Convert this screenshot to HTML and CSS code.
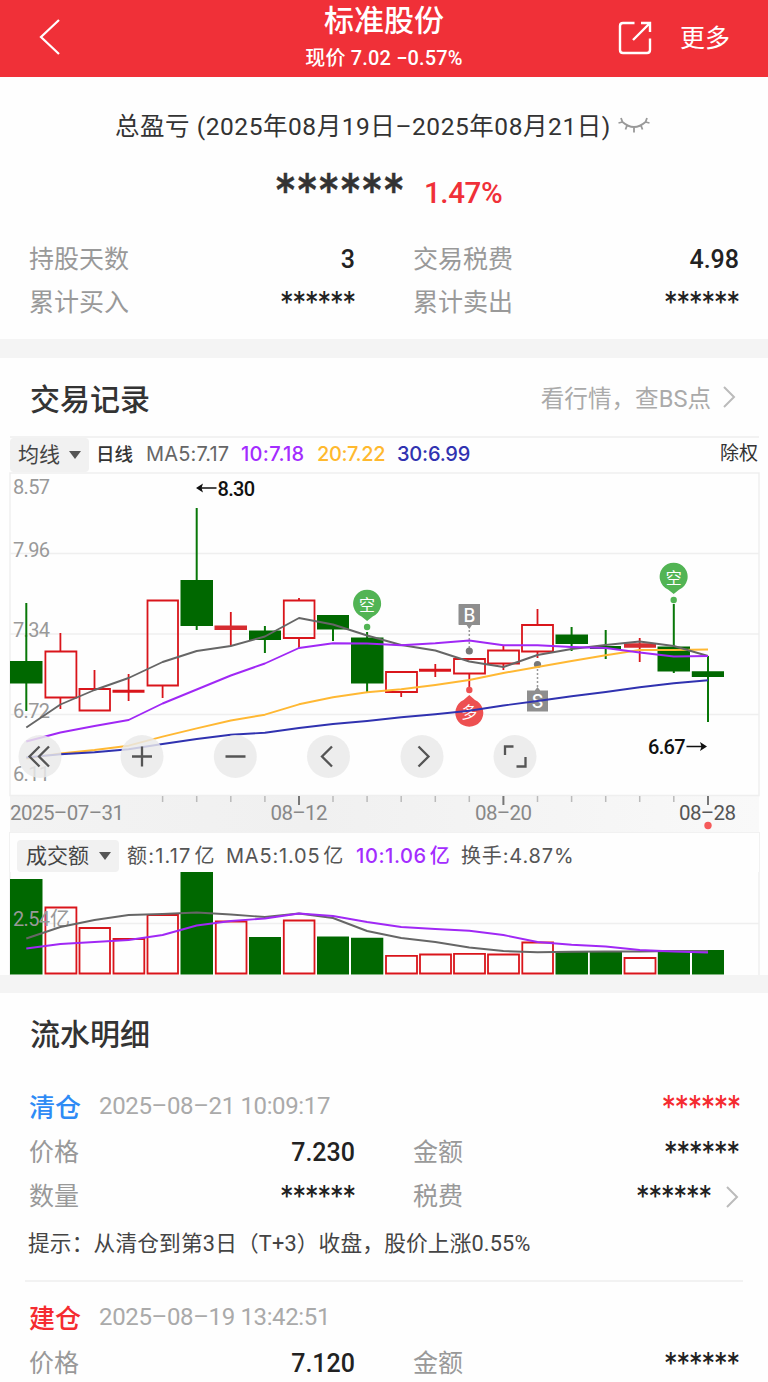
FILE: index.html
```html
<!DOCTYPE html>
<html lang="zh-CN">
<head>
<meta charset="utf-8">
<title>标准股份</title>
<link rel="stylesheet" href="styles.css">
</head>
<body>
<header class="topbar">
  <svg class="back" width="24" height="40" viewBox="0 0 24 40"><path d="M22 3 4 20 22 37"/></svg>
  <div class="heading">
    <h1 class="name">标准股份</h1>
    <p class="quote">现价 7.02 −0.57%</p>
  </div>
  <div class="actions">
    <svg class="share" width="36" height="36" viewBox="0 0 36 36"><path d="M17.500 3H6Q3 3 3 6V30Q3 33 6 33H30Q33 33 33 30V18.500M24 3H33V12M33 3 16 20"/></svg>
    <span class="more">更多</span>
  </div>
</header>

<section class="summary">
  <div class="period"><span class="period-text">总盈亏 (2025年08月19日–2025年08月21日)</span>
    <svg class="eye" width="34" height="18" viewBox="0 0 34 18"><path d="M3 1 4.500 5Q16 15 27.500 5L29 1M4.500 5 .500 6M9 8.500 7.500 12.500M16 10V15.500M23 8.500 24.500 12.500M27.500 5 31.500 6"/></svg>
  </div>
  <div class="profit"><span class="mask mask-big">******</span><span class="rate">1.47%</span></div>
  <dl class="grid stats">
    <div class="cell"><dt>持股天数</dt><dd>3</dd></div>
    <div class="cell"><dt>交易税费</dt><dd>4.98</dd></div>
    <div class="cell"><dt>累计买入</dt><dd class="mask">******</dd></div>
    <div class="cell"><dt>累计卖出</dt><dd class="mask">******</dd></div>
  </dl>
</section>

<section class="records">
  <div class="section-head">
    <h2>交易记录</h2>
    <a class="link"><span>看行情，查BS点</span><svg class="chev" width="14" height="24" viewBox="0 0 14 24"><path d="M2 2 12 12 2 22"/></svg></a>
  </div>
  <div class="chart">
    <div class="toolbar">
      <span class="pick pick-ma">均线<i class="caret"></i></span>
      <b class="kind">日线</b>
      <span class="ma5">MA5:7.17</span><span class="ma10">10:7.18</span><span class="ma20">20:7.22</span><span class="ma30">30:6.99</span>
      <span class="adjust">除权</span>
    </div>
    <svg class="kline" width="768" height="360" viewBox="0 472 768 360">
      <defs><linearGradient id="axis" x1="0" x2="1" y1="0" y2="0"><stop offset="0" stop-color="#f3f3f3"/><stop offset=".4" stop-color="#f0f0f0"/><stop offset="1" stop-color="#f9f9f9"/></linearGradient></defs>
      <rect x="10" y="796" width="749" height="36" fill="url(#axis)"/>
      <path class="rule" d="M10 473H759V795.500H10ZM10 553.500H759M10 634H759M10 714.500H759"/>
      <g class="scale">
        <text x="13" y="494" textLength="37">8.57</text><text x="13" y="557" textLength="37">7.96</text>
        <text x="13" y="637" textLength="37">7.34</text><text x="13" y="718" textLength="37">6.72</text>
        <text x="13" y="781" textLength="37">6.11</text>
      </g>
      <path class="tick" d="M162.600 796v6M196.700 796v6M230.800 796v6M264.900 796v6M333 796v6M367.100 796v6M401.200 796v6M435.300 796v6M469.300 796v6M537.500 796v6M571.600 796v6M605.700 796v6M639.700 796v6M673.800 796v6"/>
      <path class="tick-major" d="M299 796v9M503.400 796v9M708 796v9"/>
      <g class="up">
        <path d="M60.400 633V651M60.400 697V709M94.500 670V689M128.600 674V701M162.600 685V698M230.800 612V646M299 598V600M299 638V648M401.200 692V697M435.300 664V677M469.300 673V688M503.400 646V650M503.400 663V670M537.500 609V625M537.500 651V658M639.700 638V662"/>
        <path d="M45.400 651.500H76.400V697.500H45.400ZM79.500 689H110V710.500H79.500ZM147.500 600.500H178V685.500H147.500ZM283.800 600.500H314.500V638H283.800ZM386 672H417V692H386ZM454 659H485V673.500H454ZM488 650.500H519V663.500H488ZM522 625H553V651.500H522Z"/>
        <path class="flat" d="M112.500 691.200H144.500M419 670.200H451"/>
        <path class="thick" d="M214.500 627.700H247M624 645.500H656"/>
      </g>
      <g class="down">
        <path class="wick" d="M26.300 603V711M196.700 508V630M264.900 626V653M333 615V641M367.100 632V692M571.600 627V651M605.700 630V659M673.800 604V673M708 656V722"/>
        <path class="body" d="M10 661H42.500V683.500H10ZM180.500 580H213V626H180.500ZM249 630.500H281V640H249ZM317 615H349V629.500H317ZM351 637.500H383.500V683.500H351ZM555.500 634.500H588V644H555.500ZM590 646H621V649H590ZM657.500 646.500H690V671.500H657.500ZM691.800 671.300H724V677H691.800Z"/>
      </g>
      <g class="pin-green">
        <path d="M367.100 621 361.500 616.500A14 14 0 1 1 372.700 616.500ZM673.700 594 668 589.500A14 14 0 1 1 679.300 589.500Z"/><circle cx="367.100" cy="627" r="3.200"/><circle cx="673.700" cy="600" r="3.200"/>
        <text x="367" y="611">空</text><text x="673.700" y="583.500">空</text>
      </g>
      <g class="pin-red"><circle cx="469.300" cy="690" r="3.200"/><path d="M469.300 695 475 700A14 14 0 1 1 463.600 700Z"/><text x="469.300" y="718">多</text></g>
      <g class="flag">
        <path class="stem" d="M469.300 626V650M537.500 665V690"/>
        <circle cx="469.300" cy="651" r="3.600"/><circle cx="537.500" cy="664.500" r="3.600"/>
        <path d="M459 604H480V625H472L469.300 629 466.600 625H459Q458.500 625 458.500 624V604.500ZM527 690.500H534.800L537.500 687 540.200 690.500H548V711.500H527Z"/>
        <text x="469.300" y="621.500">B</text><text x="537.500" y="708">S</text>
      </g>
      <g class="line">
        <polyline class="l20" points="26.300,758.500 60.400,753.500 94.500,750 128.600,745.700 162.600,736.700 196.700,728.300 230.800,720.500 264.900,714.700 299,704.300 333,697.300 367.100,692.300 401.200,689.300 435.300,685 469.300,680 503.400,673 537.500,667 571.600,661 605.700,655.300 639.700,650 673.800,650 708,649.500"/>
        <polyline class="l30" points="26.300,757.500 60.400,754.300 94.500,752.300 128.600,749.300 162.600,744 196.700,739 230.800,734.700 264.900,732.700 299,728 333,724 367.100,721 401.200,717.300 435.300,714.300 469.300,710.700 503.400,705.500 537.500,701 571.600,696.300 605.700,692 639.700,687.300 673.800,683.300 708,680.300"/>
        <polyline class="l5" points="26.300,727.500 60.400,704.500 94.500,690 128.600,678 162.600,662 196.700,651 230.800,646 264.900,636.500 299,618 333,624.500 367.100,635.500 401.200,645 435.300,650.500 469.300,661.500 503.400,667 537.500,655 571.600,649 605.700,645 639.700,641.500 673.800,646 708,656"/>
        <polyline class="l10" points="26.300,741.500 60.400,732.500 94.500,726 128.600,720 162.600,703.500 196.700,689.500 230.800,675.500 264.900,663.500 299,648 333,643.300 367.100,643.500 401.200,645.300 435.300,643.300 469.300,640.500 503.400,645.300 537.500,645.300 571.600,647 605.700,648 639.700,652.500 673.800,656.500 708,656"/>
      </g>
      <g class="extreme"><path d="M200 488H216.500M686.500 746.500H703"/><path class="tip" d="M196 488 203 483.500 201.500 488 203 492.500ZM707 746.500 700 742 701.500 746.500 700 751Z"/>
        <text x="217.500" y="495.500" textLength="37.500">8.30</text><text x="648" y="754" textLength="37.500">6.67</text></g>
      <g class="disc"><circle cx="40" cy="756.500" r="21.500"/><circle cx="142" cy="756.500" r="21.500"/><circle cx="235.300" cy="756.500" r="21.500"/><circle cx="328.500" cy="756.500" r="21.500"/><circle cx="422" cy="756.500" r="21.500"/><circle cx="515" cy="756.500" r="21.500"/></g>
      <path class="glyph" d="M39.500 746.500 29.500 756.500 39.500 766.500M49 746.500 39 756.500 49 766.500M132 756.500H152M142 746.500V766.500M225.500 756.500H245.500M332 746.500 322 756.500 332 766.500M418.500 746.500 428.500 756.500 418.500 766.500M505 755V746.500H513.500M525.500 757V766.500H516.500"/>
      <g class="dates"><text x="10" y="820" textLength="114">2025–07–31</text><text x="270.500" y="820" textLength="57">08–12</text><text x="475" y="820" textLength="57">08–20</text><text class="now" x="679" y="820" textLength="57">08–28</text></g>
      <circle cx="708" cy="825.500" r="3.700" fill="#f55a5a"/>
    </svg>
    <div class="toolbar-vol">
      <span class="pick pick-vol">成交额<i class="caret"></i></span>
      <span class="v-amt">额:1.17<em>亿</em></span><span class="v-ma5">MA5:1.05<em>亿</em></span><span class="v-ma10">10:1.06<em>亿</em></span><span class="v-turn">换手:4.87%</span>
    </div>
    <svg class="volume" width="768" height="103" viewBox="0 872 768 103">
      <path class="rule" d="M10 872V975M759 872V975M10 923.500H759"/>
      <path class="down body" d="M10 879H42.500V974.500H10ZM180.500 872H213V974.500H180.500ZM249 937H281V974.500H249ZM317 936.500H349V974.500H317ZM351 937.800H383.300V974.500H351ZM555.500 951.800H588V974.500H555.500ZM589.800 951.800H622V974.500H589.800ZM657.800 950H690V974.500H657.800ZM692 950H724V974.500H692Z"/>
      <g class="up"><path d="M45.400 973.500V907.500H76.400V973.500ZM79.500 973.500V928H110V973.500ZM113.500 973.500V939H144.300V973.500ZM147.500 973.500V915H178V973.500ZM215.800 973.500V921.500H246.500V973.500ZM283.800 973.500V920.500H314.500V973.500ZM386 973.500V955.800H417V973.500ZM420 973.500V954.500H451V973.500ZM454 973.500V953.800H485V973.500ZM488 973.500V954.500H519V973.500ZM522.300 973.500V942.500H553V973.500ZM624.500 973.500V958H655.500V973.500Z"/></g>
      <g class="scale"><text x="13" y="926" textLength="37">2.54</text><text x="50" y="926" textLength="20">亿</text></g>
      <g class="line">
        <polyline class="l5" points="26.300,938.500 60.400,927 94.500,920 128.600,915 162.600,914 196.700,912.500 230.800,914.500 264.900,917 299,913.500 333,918 367.100,931 401.200,938 435.300,942 469.300,947.500 503.400,951 537.500,952.300 571.600,951.700 605.700,951.500 639.700,951.500 673.800,951 708,951"/>
        <polyline class="l10" points="26.300,948.500 60.400,944 94.500,942 128.600,940 162.600,935 196.700,925.500 230.800,921 264.900,918.500 299,913.500 333,916 367.100,922 401.200,927 435.300,929 469.300,930.700 503.400,935 537.500,942 571.600,944.700 605.700,946.500 639.700,950 673.800,951.500 708,952.500"/>
      </g>
    </svg>
  </div>
</section>

<section class="flow">
  <div class="section-head"><h2>流水明细</h2></div>
  <article class="trade">
    <div class="trade-head"><b class="sell">清仓</b><time>2025–08–21 10:09:17</time><span class="mask mask-red">******</span></div>
    <dl class="grid">
      <div class="cell"><dt>价格</dt><dd>7.230</dd></div>
      <div class="cell"><dt>金额</dt><dd class="mask">******</dd></div>
      <div class="cell"><dt>数量</dt><dd class="mask">******</dd></div>
      <div class="cell"><dt>税费</dt><dd class="mask with-chev">******</dd><svg class="chev" width="14" height="24" viewBox="0 0 14 24"><path d="M2 2 12 12 2 22"/></svg></div>
    </dl>
    <p class="hint">提示：从清仓到第3日（T+3）收盘，股价上涨0.55%</p>
  </article>
  <article class="trade">
    <div class="trade-head"><b class="buy">建仓</b><time>2025–08–19 13:42:51</time></div>
    <dl class="grid">
      <div class="cell"><dt>价格</dt><dd>7.120</dd></div>
      <div class="cell"><dt>金额</dt><dd class="mask">******</dd></div>
    </dl>
  </article>
</section>
</body>
</html>
```
FILE: styles.css
```css
* { box-sizing: border-box; margin: 0; padding: 0; }
html, body { width: 768px; height: 1382px; overflow: hidden; }
body { background: #fefefe; color: #333; font-family: Roboto, "Noto Sans CJK SC", sans-serif; white-space: nowrap; }
svg { display: block; flex: none; }
svg path, svg polyline { fill: none; }
em, i { font-style: normal; }

.topbar { display: grid; grid-template-columns: 1fr auto 1fr; height: 77px; background: #f03038; color: #fff; }
.back { margin: 17px 0 0 37px; stroke: #fff; stroke-width: 2.2; }
.heading { text-align: center; }
.name { height: 42px; font-size: 30px; line-height: 41px; font-weight: 500; }
.quote { font-size: 20px; line-height: 33px; font-weight: 500; letter-spacing: .15px; }
.actions { display: flex; align-items: flex-start; justify-content: flex-end; padding: 20px 38px 0 0; }
.share { stroke: #fff; stroke-width: 2.4; }
.more { margin-left: 27px; font-size: 25px; line-height: 38px; }

.summary { height: 262px; }
.period { display: flex; align-items: center; height: 60px; padding: 39px 0 0 115px; line-height: 60px; font-size: 24.500px; }
.period-text { width: 502px; letter-spacing: .55px; }
.eye { margin: -2px 0 0 1px; stroke: #999; stroke-width: 1.8; }
.profit { display: flex; align-items: center; height: 100px; padding: 12px 0 0 276px; }
.mask { font-family: "DejaVu Sans", sans-serif; font-weight: 700; font-size: 22px; letter-spacing: 1px; transform: scaleY(1.2); }
.mask-big { width: 148px; margin-top: -6px; font-size: 36px; letter-spacing: 2.800px; -webkit-text-stroke: .4px; }
.rate { color: #f03038; font-size: 29.500px; font-weight: 500; letter-spacing: -.4px; }
.grid { display: grid; grid-template-columns: 326px 326px; column-gap: 58px; padding-left: 29px; grid-auto-rows: 44px; }
.cell { display: flex; align-items: center; justify-content: space-between; height: 44px; line-height: 44px; }
dt { color: #999; font-size: 25px; }
dd { color: #222; font-size: 25px; font-weight: 500; }
dd.mask { font-size: 22px; font-weight: 700; margin: -1px -1px 0 0; }
.stats { padding-top: 1px; grid-auto-rows: 43px; }

.records { border-top: 19px solid #f4f4f4; }
.section-head { display: flex; justify-content: space-between; align-items: center; height: 78px; padding: 0 32px 1px 30px; }
h2 { font-size: 30px; font-weight: 500; }
.link { display: flex; align-items: center; gap: 11px; color: #aaa; font-size: 23.600px; }
.chev { stroke: #bbb; stroke-width: 2; }
.toolbar { display: flex; align-items: center; height: 36px; margin: 0 9px 0 10px; border-top: 2px solid #f2f2f2; font: 20px/34px Inter, "Noto Sans CJK SC", sans-serif; }
.toolbar > * { height: 34px; line-height: 32px; }
.pick { display: flex; align-items: center; background: #f1f1f1; border-radius: 4px; color: #444; }
.pick-ma { width: 79px; padding-left: 8px; gap: 9px; font-size: 21px; }
.caret { border: 6px solid transparent; border-top: 8px solid #555; border-bottom: 0; }
.kind { margin-left: 7px; width: 50px; font-size: 18.500px; font-weight: 500; }
.ma5 { width: 95px; color: #666; letter-spacing: .15px; }
.ma10 { width: 76px; color: #a32cff; font-weight: 500; letter-spacing: .3px; }
.ma20 { width: 80px; color: #ffb92e; font-weight: 500; letter-spacing: -.4px; }
.ma30 { color: #3032b0; font-weight: 500; letter-spacing: -.2px; }
.adjust { margin-left: auto; padding-right: 1px; font-size: 19px; }
.toolbar-vol { display: flex; align-items: center; height: 40px; margin: 0 8px 0 9px; padding: 6px 0 0 7px; border: solid #f1f1f1; border-width: 1px 1px 0; font: 20px/32px Inter, "Noto Sans CJK SC", sans-serif; color: #555; }
.toolbar-vol em { margin-left: 3px; }
.pick-vol { width: 102px; height: 32px; padding-left: 9px; gap: 10px; font-size: 21px; margin-right: 8px; }
.v-amt { width: 99px; letter-spacing: 1.2px; }
.v-ma5 { width: 130px; letter-spacing: .8px; }
.v-ma10 { width: 105px; color: #a32cff; font-weight: 500; letter-spacing: .6px; }
.v-turn { letter-spacing: .85px; }

.rule { stroke: #efefef; stroke-width: 1.5; }
.scale { fill: #999; font-size: 20px; }
.tick { stroke: #bbb; stroke-width: 1.5; }
.tick-major { stroke: #777; stroke-width: 2; }
.up path { stroke: #d9151b; stroke-width: 1.8; }
.up .flat { stroke-width: 3; }
.up .thick { stroke: #d62c31; stroke-width: 4.5; }
.wick { stroke: #087708; stroke-width: 2; }
svg .body { fill: #006800; }
.pin-green path, .pin-green circle { fill: #52b454; }
.pin-red path, .pin-red circle { fill: #ed5051; }
.pin-green text, .pin-red text { fill: #fff; font-size: 16px; text-anchor: middle; }
.flag path, .flag circle { fill: #8e8e8e; }
.flag circle { fill: #777; }
.flag .stem { stroke: #999; stroke-dasharray: 2 2; stroke-width: 1.5; }
.flag text { fill: #fff; font: 500 18px Inter, sans-serif; text-anchor: middle; }
.line polyline { stroke-width: 1.9; stroke-linejoin: round; }
.line .l5 { stroke: #666; }
.line .l10 { stroke: #a028f5; }
.line .l20 { stroke: #ffb833; }
.line .l30 { stroke: #3032b0; }
.extreme { fill: #111; font-size: 20px; font-weight: 500; }
.extreme path { stroke: #111; stroke-width: 1.7; }
.extreme .tip { fill: #111; stroke: none; }
.disc { fill: #e9e9e9; fill-opacity: .83; }
.glyph { stroke: #555; stroke-width: 2.3; }
.dates { fill: #888; font-size: 20.500px; }
.dates .now { fill: #555; }

.flow { border-top: 18px solid #f4f4f4; }
.trade { padding-top: 13px; height: 209px; }
.trade .grid { padding-top: 4px; }
.trade + .trade { height: 102px; margin: 0 25px; padding-top: 13px; border-top: 2px solid #f2f2f2; }
.trade + .trade .trade-head, .trade + .trade .grid { margin-left: -25px; }
.trade-head { display: flex; align-items: center; height: 43px; padding: 0 28px 0 29px; }
.trade-head b { width: 70px; font-size: 26px; font-weight: 500; }
.sell { color: #2e8bf5; }
.buy { color: #f52b30; }
time { padding-top: 1px; color: #aaa; font-size: 24px; letter-spacing: -.36px; }
.mask-red { margin-left: auto; margin-right: -1px; color: #f52b30; font-size: 23px; }
dd.with-chev { margin-left: auto; margin-right: 13px; }
.hint { padding-left: 28px; font-size: 21.700px; letter-spacing: .16px; line-height: 50px; color: #444; }
```
